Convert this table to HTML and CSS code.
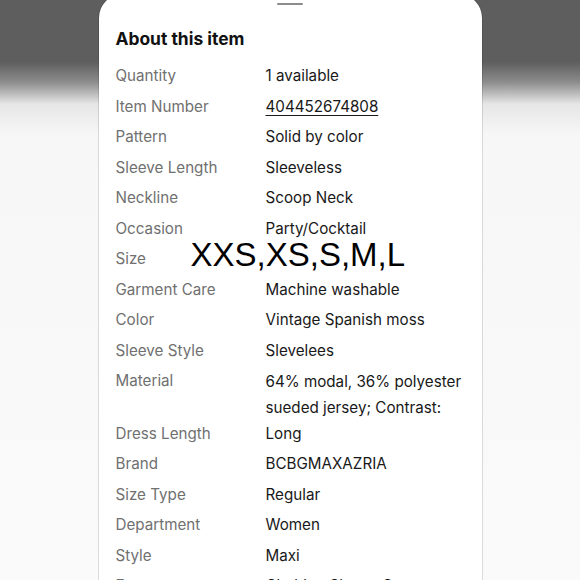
FILE: index.html
```html
<!DOCTYPE html>
<html lang="en">
<head>
    <meta charset="UTF-8">
    <meta name="viewport" content="width=device-width, initial-scale=1.0">
    <title>About this item</title>
    <link rel="stylesheet" href="styles.css">
</head>
<body>
    <div class="sheet">
        <div class="handle"></div>
        <h2>About this item</h2>

        <div class="specs">
            <div class="row"><span class="label">Quantity</span><span class="value">1 available</span></div>
            <div class="row"><span class="label">Item Number</span><span class="value link">404452674808</span></div>
            <div class="row"><span class="label">Pattern</span><span class="value">Solid by color</span></div>
            <div class="row"><span class="label">Sleeve Length</span><span class="value">Sleeveless</span></div>
            <div class="row"><span class="label">Neckline</span><span class="value">Scoop Neck</span></div>
            <div class="row"><span class="label">Occasion</span><span class="value">Party/Cocktail</span></div>
            <div class="row"><span class="label">Size</span><span class="value"></span></div>
            <div class="row"><span class="label">Garment Care</span><span class="value">Machine washable</span></div>
            <div class="row"><span class="label">Color</span><span class="value">Vintage Spanish moss</span></div>
            <div class="row"><span class="label">Sleeve Style</span><span class="value">Slevelees</span></div>
            <div class="row tall"><span class="label">Material</span><span class="value">64% modal, 36% polyester<br>sueded jersey; Contrast:</span></div>
            <div class="row"><span class="label">Dress Length</span><span class="value">Long</span></div>
            <div class="row"><span class="label">Brand</span><span class="value">BCBGMAXAZRIA</span></div>
            <div class="row"><span class="label">Size Type</span><span class="value">Regular</span></div>
            <div class="row"><span class="label">Department</span><span class="value">Women</span></div>
            <div class="row"><span class="label">Style</span><span class="value">Maxi</span></div>
            <div class="row"><span class="label">Features</span><span class="value">Clothing Sleeve Cap</span></div>
        </div>

        <div class="size-note">XXS,XS,S,M,L</div>
    </div>
</body>
</html>
```

FILE: styles.css
```css
body {
    margin: 0;
    height: 580px;
    overflow: hidden;
    font-family: 'Inter', 'Noto Sans', sans-serif;
    background: linear-gradient(to bottom, #5e5e5e 0, #5e5e5e 62px, #8c8c8c 82px, #e6e6e6 104px, #f7f7f7 135px, #fafafa 100%);
}

.sheet {
    position: relative;
    width: 383px;
    margin: -6px auto 0;
    padding: 10px 17px 0;
    box-sizing: border-box;
    height: 700px;
    background: #fff;
    border-radius: 24px 24px 0 0;
    box-shadow: 0 0 0 1px rgba(0, 0, 0, 0.12);
}

.handle {
    width: 26px;
    height: 2px;
    margin: -1px auto 0;
    background: #8c8c8c;
    border-radius: 1px;
}

.sheet h2 {
    margin: 22px 0 13px;
    font-size: 17.4px;
    line-height: 24px;
    font-weight: 700;
    color: #111;
}

.specs {
    display: flex;
    flex-direction: column;
    gap: 6.5px;
}

.row {
    display: grid;
    grid-template-columns: 150px 1fr;
    font-size: 15.2px;
    line-height: 24px;
}

.label {
    color: #707070;
}

.value {
    color: #191919;
}

.value.link {
    text-decoration: underline;
    text-underline-offset: 3px;
}

.row.tall .value {
    line-height: 26px;
    margin-bottom: -6px;
    white-space: nowrap;
}

.size-note {
    position: absolute;
    left: 92px;
    top: 244px;
    font-family: 'Liberation Sans', Arial, sans-serif;
    font-size: 33px;
    line-height: 33px;
    color: #000;
}
```
